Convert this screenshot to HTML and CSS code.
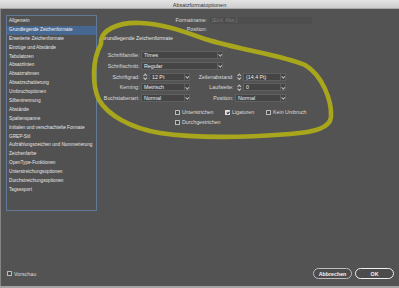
FILE: index.html
```html
<!DOCTYPE html>
<html lang="de">
<head>
    <meta charset="UTF-8">
    <title>Absatzformatoptionen</title>
    <link rel="stylesheet" href="styles.css">
</head>
<body>
<div class="win">
    <div class="titlebar">Absatzformatoptionen</div>

    <div class="content">
        <div class="main">
            <ul class="nav">
                <li>Allgemein</li>
                <li class="active">Grundlegende Zeichenformate</li>
                <li>Erweiterte Zeichenformate</li>
                <li>Einzüge und Abstände</li>
                <li>Tabulatoren</li>
                <li>Absatzlinien</li>
                <li>Absatzrahmen</li>
                <li>Absatzschattierung</li>
                <li>Umbruchoptionen</li>
                <li>Silbentrennung</li>
                <li>Abstände</li>
                <li>Spaltenspanne</li>
                <li>Initialen und verschachtelte Formate</li>
                <li>GREP-Stil</li>
                <li>Aufzählungszeichen und Nummerierung</li>
                <li>Zeichenfarbe</li>
                <li>OpenType-Funktionen</li>
                <li>Unterstreichungsoptionen</li>
                <li>Durchstreichungsoptionen</li>
                <li>Tagsexport</li>
            </ul>

            <div class="panel">
                <div class="name-row">
                    <span class="name-lbl">Formatname:</span>
                    <span class="name-field">[Einf. Abs.]</span>
                </div>
                <div class="name-row">
                    <span class="name-lbl">Position:</span>
                </div>

                <h2>Grundlegende Zeichenformate</h2>

                <div class="form">
                    <span class="lbl">Schriftfamilie:</span>
                    <div class="sel wide"><span>Times</span><i class="arr"></i></div>

                    <span class="lbl">Schriftschnitt:</span>
                    <div class="sel wide"><span>Regular</span><i class="arr"></i></div>

                    <span class="lbl">Schriftgrad:</span>
                    <div class="spin"><i class="updown"></i><div class="sel"><span>12 Pt</span><i class="arr"></i></div></div>
                    <span class="lbl">Zeilenabstand:</span>
                    <div class="spin"><i class="updown"></i><div class="sel"><span>(14,4 Pt)</span><i class="arr"></i></div></div>

                    <span class="lbl">Kerning:</span>
                    <div class="sel"><span>Metrisch</span><i class="arr"></i></div>
                    <span class="lbl">Laufweite:</span>
                    <div class="spin"><i class="updown"></i><div class="sel"><span>0</span><i class="arr"></i></div></div>

                    <span class="lbl">Buchstabenart:</span>
                    <div class="sel"><span>Normal</span><i class="arr"></i></div>
                    <span class="lbl">Position:</span>
                    <div class="sel"><span>Normal</span><i class="arr"></i></div>
                </div>

                <div class="checks">
                    <label class="chk"><i class="box"></i>Unterstrichen</label>
                    <label class="chk"><i class="box on"></i>Ligaturen</label>
                    <label class="chk"><i class="box"></i>Kein Umbruch</label>
                    <label class="chk"><i class="box"></i>Durchgestrichen</label>
                </div>
            </div>
        </div>

        <div class="footer">
            <label class="chk"><i class="box"></i>Vorschau</label>
            <div class="buttons">
                <button class="btn">Abbrechen</button>
                <button class="btn default">OK</button>
            </div>
        </div>
    </div>
    <div class="edge"></div>

    <!-- Markierung von Hand -->
    <svg class="marker" width="399" height="288" viewBox="0 0 399 288">
        <path d="M101,44 C100,30 118,22 140,23 C165,24 185,32 205,39 C240,50 282,55 305,65 C322,75 332,100 331,117 C330,128 315,132 290,134 C250,137 200,139 160,133 C130,128 108,115 99,100 C92,85 92,60 101,44"
              fill="none" stroke="#a8a61d" stroke-width="4.6" stroke-linecap="round"/>
    </svg>
</div>
</body>
</html>
```

FILE: styles.css
```css
* {
    margin: 0;
    padding: 0;
    box-sizing: border-box;
}

body {
    background: #535353;
    font-family: "Liberation Sans", Arial, sans-serif;
    color: #dcdcdc;
}

.win {
    position: relative;
    width: 399px;
    height: 288px;
    display: flex;
    flex-direction: column;
    overflow: hidden;
}

.titlebar {
    height: 9px;
    background: linear-gradient(#e4e4e4, #cdcdcd);
    color: #333;
    font-size: 5.5px;
    line-height: 10px;
    text-align: center;
    border-bottom: 1px solid #a9a9a9;
}

.content {
    flex: 1;
    display: flex;
    flex-direction: column;
    border-left: 1px solid #858585;
    background: #535353;
}

.edge {
    height: 2px;
    background: #a4a4a4;
}

.main {
    display: flex;
    padding-top: 6px;
}

/* linke Liste */
.nav {
    list-style: none;
    width: 91px;
    height: 196px;
    margin-left: 5px;
    padding-top: 1px;
    border: 1px solid #62799a;
    background: #515151;
}

.nav li {
    height: 8.9px;
    line-height: 8.9px;
    padding-left: 2px;
    font-size: 4.7px;
    color: #e6e6e6;
    white-space: nowrap;
}

.nav li.active {
    background: #46678f;
    color: #f4f4f4;
}

/* rechte Seite */
.panel {
    margin-left: 3px;
    width: 290px;
}

.name-row {
    display: flex;
    align-items: center;
    height: 8px;
    margin-top: 1px;
    font-size: 5.3px;
}

.name-lbl {
    width: 107px;
    text-align: right;
}

.name-field {
    margin-left: 3px;
    width: 102px;
    height: 7px;
    line-height: 7px;
    padding-left: 2px;
    background: #4d4d4d;
    color: #7d7d7d;
}

h2 {
    height: 8px;
    line-height: 8px;
    margin-top: 1px;
    padding-left: 1px;
    font-size: 5.3px;
    font-weight: normal;
    color: #e6e6e6;
}

.form {
    margin-top: 9px;
    display: grid;
    grid-template-columns: 41px 49px 45px 51px;
    grid-auto-rows: 8px;
    row-gap: 2.75px;
    align-items: center;
    font-size: 5.3px;
}

.lbl {
    text-align: right;
    padding-right: 1.5px;
    white-space: nowrap;
}

.sel {
    display: flex;
    align-items: center;
    height: 8px;
    background: #454545;
    border: 1px solid #5f5f5f;
    color: #ececec;
}

.sel span {
    flex: 1;
    padding-left: 2px;
    line-height: 6px;
}

.sel.wide {
    grid-column: 2 / span 3;
    width: 82px;
}

.arr {
    width: 5px;
    height: 6px;
    border-left: 1px solid #5f5f5f;
    position: relative;
}

.arr::after {
    content: "";
    position: absolute;
    left: 1.2px;
    top: 1.3px;
    width: 1.6px;
    height: 1.6px;
    border-right: 0.7px solid #bdbdbd;
    border-bottom: 0.7px solid #bdbdbd;
    transform: rotate(45deg);
}

.spin {
    display: flex;
    align-items: center;
}

.spin .sel {
    flex: 1;
}

.updown {
    width: 8px;
    height: 8px;
    position: relative;
}

.updown::before,
.updown::after {
    content: "";
    position: absolute;
    left: 3px;
    width: 1.5px;
    height: 1.5px;
    border-left: 0.7px solid #c4c4c4;
    border-top: 0.7px solid #c4c4c4;
}

.updown::before {
    top: 1.6px;
    transform: rotate(45deg);
}

.updown::after {
    top: 4.6px;
    transform: rotate(-135deg);
}

/* Checkboxen */
.checks {
    margin-top: 6px;
    padding-left: 75px;
    display: grid;
    grid-template-columns: 50px 41px auto;
    grid-auto-rows: 8px;
    row-gap: 2px;
    align-items: center;
    font-size: 5.3px;
}

.chk {
    display: flex;
    align-items: center;
    white-space: nowrap;
}

.box {
    width: 5px;
    height: 5px;
    margin-right: 2px;
    border: 0.8px solid #bcbcbc;
    border-radius: 0.6px;
    background: #4a4a4a;
    position: relative;
}

.box.on {
    background: #d2d2d2;
    border-color: #e0e0e0;
}

.box.on::after {
    content: "";
    position: absolute;
    left: 1.3px;
    top: 0.2px;
    width: 1.2px;
    height: 2.4px;
    border-right: 0.8px solid #333;
    border-bottom: 0.8px solid #333;
    transform: rotate(45deg);
}

/* unten */
.footer {
    margin-top: auto;
    margin-bottom: 7px;
    height: 11px;
    display: flex;
    align-items: center;
    justify-content: space-between;
    padding-left: 6px;
    padding-right: 5px;
    font-size: 5.3px;
}

.buttons {
    display: flex;
    gap: 3px;
}

.btn {
    width: 39px;
    height: 11px;
    border-radius: 6px;
    border: 0.8px solid #bdbdbd;
    background: #4c4c4c;
    color: #f2f2f2;
    font-family: "Liberation Sans", Arial, sans-serif;
    font-size: 5.3px;
    font-weight: bold;
}

.btn.default {
    border: 1.3px solid #f0f0f0;
}

.marker {
    position: absolute;
    left: 0;
    top: 0;
    pointer-events: none;
}
```
